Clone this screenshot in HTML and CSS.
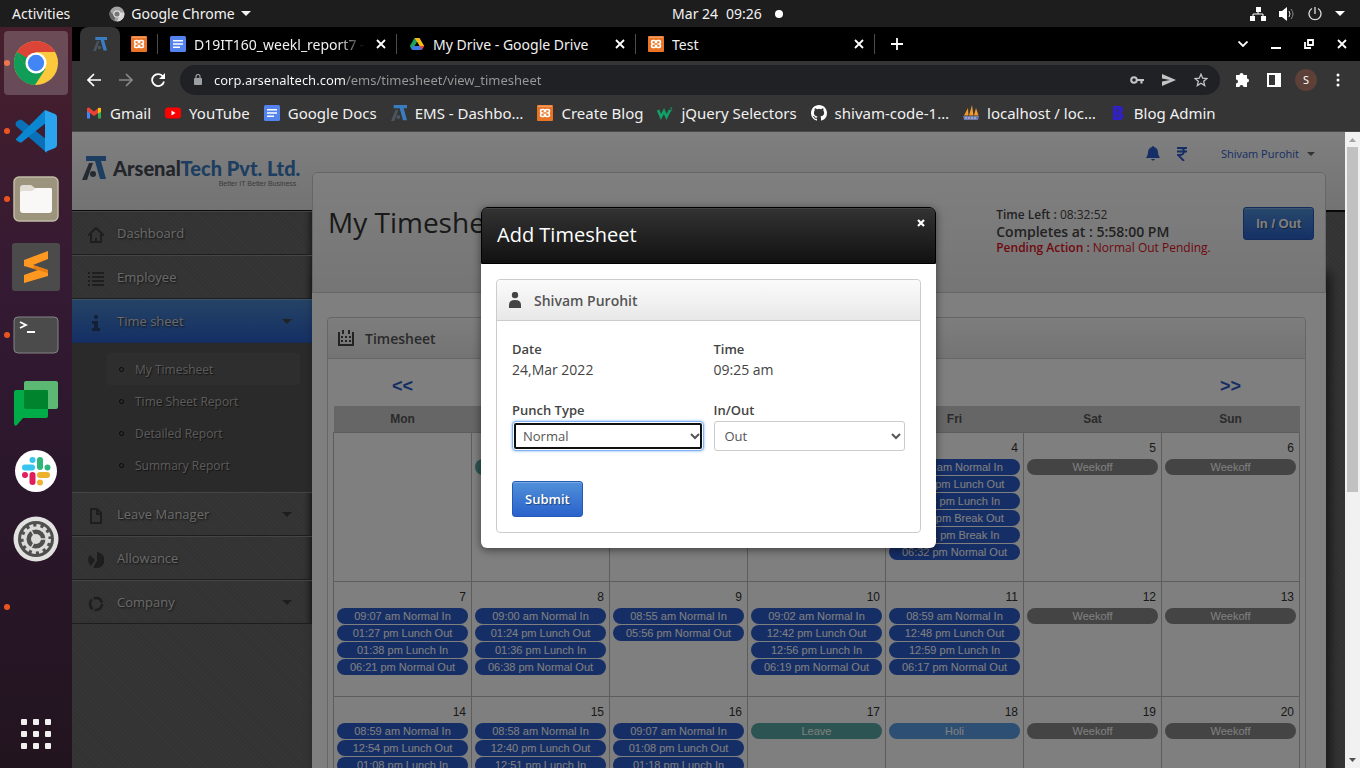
FILE: index.html
```html
<!DOCTYPE html>
<html lang="en">
<head>
<meta charset="utf-8">
<title>My Timesheet</title>
<link rel="stylesheet" href="styles.css">
</head>
<body>
<svg class="sprite" aria-hidden="true">
  <symbol id="i-arsenal" viewBox="0 0 24 24"><path d="M4 0h20v5h-5l5 18h-6L13 5H4z" fill="#3a7cc0"/><path d="M7 7h4L5 24H0z" fill="#4a5560"/><circle cx="11" cy="18" r="3" fill="#4a5560"/></symbol>
  <symbol id="i-xampp" viewBox="0 0 16 16"><rect width="16" height="16" rx="1" fill="#ea7426"/><path d="M1 1.200h14" stroke="#fff" stroke-width=".6" opacity=".7"/><path d="M5 4.500h1.500q1 0 1 1v1h1v-1q0-1 1-1H11q1.500 0 1.500 1.500T11 8q1.500.5 1.500 2t-1.500 1.500H9.500q-1 0-1-1v-1h-1v1q0 1-1 1H5q-1.500 0-1.500-1.500T5 8Q3.500 7.500 3.500 6T5 4.500z" fill="none" stroke="#fff" stroke-width="1.600"/></symbol>
  <symbol id="i-docs" viewBox="0 0 16 16"><rect width="16" height="16" rx="1.500" fill="#5383ec"/><path d="M3 4.800h10M3 8h10M3 11.200h7" stroke="#fff" stroke-width="1.600"/></symbol>
  <symbol id="i-drive" viewBox="0 0 16 16"><path d="M5.500 2h5L8 6.200 3 14 .800 10z" fill="#20a15a"/><path d="M10.500 2 15.200 10h-4.600L5.700 2z" fill="#f9bc15"/><path d="M3.300 10h9.500l-.300 4H3z" fill="#3f78e8"/><path d="M10.700 10h4.500L13 14z" fill="#e94335"/><path d="M8 6.300 10.200 10H5.800z" fill="#000"/></symbol>
  <symbol id="i-close" viewBox="0 0 12 12"><path d="m2 2 8 8M10 2l-8 8" stroke="currentColor" stroke-width="1.800"/></symbol>
  <symbol id="i-caret" viewBox="0 0 10 5"><path d="M0 0h10L5 5z" fill="currentColor"/></symbol>
  <symbol id="i-chrome" viewBox="0 0 48 48"><circle cx="24" cy="24" r="23" fill="#fcc93c"/><path d="M4.100 12.500A23 23 0 0 1 43.900 12.500H24L14 29z" fill="#db4437"/><path d="M4.100 12.500A23 23 0 0 0 23 47L34 30 14.500 30z" fill="#0f9d58"/><path d="M4.100 12.500 14.500 30 24 24z" fill="#0f9d58"/><circle cx="24" cy="24" r="11" fill="#fff"/><circle cx="24" cy="24" r="8.500" fill="#4285f4"/></symbol>
</svg>

<div class="desktop">
  <header class="topbar">
    <div class="topbar-side">
      <span>Activities</span>
      <span class="topbar-app">
        <svg width="16" height="16" viewBox="0 0 16 16"><circle cx="8" cy="8" r="7.500" fill="#a3a3a3"/><path d="M1 5 6 11l-.500 4A7.500 7.500 0 0 1 1 5z" fill="#666"/><path d="M11 8.500 8 15.500a7.500 7.500 0 0 0 7.200-9H10z" fill="#d8d8d8"/><circle cx="8" cy="8" r="3.600" fill="#eee"/><circle cx="8" cy="8" r="2.600" fill="#777"/></svg>
        Google Chrome
        <svg class="caret" width="10" height="5"><use href="#i-caret"/></svg>
      </span>
    </div>
    <div class="topbar-clock"><span>Mar 24</span><span>09:26</span><i class="clock-dot"></i></div>
    <div class="topbar-status">
      <svg width="16" height="14" viewBox="0 0 16 14"><path d="M8 3v4M3 10V7h10v3" fill="none" stroke="#fff"/><path d="M6 0h5v5H6zM0 9h5v5H0zM11 9h5v5h-5z" fill="#fff"/></svg>
      <svg width="16" height="14" viewBox="0 0 16 14"><path d="M0 4h3l5-4v14L3 10H0z" fill="#fff"/><path d="M10 4q2 3 0 6" fill="none" stroke="#ddd"/><path d="M12 2q4 5 0 10" fill="none" stroke="#888"/></svg>
      <svg width="14" height="14" viewBox="0 0 14 14"><path d="M7 0v7M4 1.500a6 6 0 1 0 6 0" fill="none" stroke="#ddd" stroke-width="1.300"/></svg>
      <svg width="10" height="5" color="#fff"><use href="#i-caret"/></svg>
    </div>
  </header>

  <div class="workspace">
    <nav class="dock" aria-label="Dock">
      <a href="#" class="dock-item running selected" aria-label="Chrome"><svg width="46" height="46"><use href="#i-chrome"/></svg></a>
      <a href="#" class="dock-item running" aria-label="Code"><svg width="44" height="44" viewBox="0 0 44 44"><path d="M2 13 5 11q2-1 3 0l25 20v13L2 17q-1-2 0-4z" fill="#0a70b8"/><path d="M2 30 31 1l2 12L8 33q-1 1-3 0l-3-2z" fill="#0b86d1"/><path d="M31 1 41 5q2 1 2 3v28q0 2-2 3l-10 4z" fill="#2ba4f0"/></svg></a>
      <a href="#" class="dock-item running" aria-label="Files"><svg width="46" height="46" viewBox="0 0 46 46"><rect x="1" y="1" width="44" height="44" rx="5" fill="#9d947e" stroke="#c1bba5" stroke-width="1.500"/><path d="M7 12q0-3 3-3h8l4 3h16q1 0 1 2v8H7z" fill="#e2ddd4"/><path d="M7 17q0-2 2-2h10l4-3h14q2 0 2 2v20q0 3-3 3H10q-3 0-3-3z" fill="#f9f8f6"/></svg></a>
      <a href="#" class="dock-item" aria-label="Sublime Text"><svg width="48" height="48" viewBox="0 0 48 48"><rect width="48" height="48" rx="3" fill="#4b4b4b"/><path d="M12 17 36 8v8l-15 6 15 5v6L12 40v-8l14-5-14-4z" fill="#ff9820"/><path d="m21 22 15 5v3l-14-4z" fill="#e87e12"/></svg></a>
      <a href="#" class="dock-item running" aria-label="Terminal"><svg width="46" height="38" viewBox="0 0 46 38"><rect x="1" y="1" width="44" height="36" rx="4" fill="#4b4b4b" stroke="#858585"/><path d="m7 6 6 3-6 3M14 16h8" fill="none" stroke="#fff" stroke-width="1.800"/></svg></a>
      <a href="#" class="dock-item" aria-label="Chat"><svg width="44" height="46" viewBox="0 0 44 46"><rect x="10" y="1" width="34" height="28" rx="2" fill="#5bb974"/><path d="M2 10h31q1 0 1 2v24q0 2-2 2H9l-6 7q-2 2-3-1V12q0-2 2-2z" fill="#00ac47"/><path d="M10 10h23q1 0 1 2v17H12q-2 0-2-2z" fill="#00832d"/></svg></a>
      <a href="#" class="dock-item" aria-label="Slack"><svg width="42" height="42" viewBox="0 0 42 42"><circle cx="21" cy="21" r="21" fill="#fff"/><g stroke-width="6" stroke-linecap="round"><path d="M10 17.500h7M17.500 10v0" stroke="#36c5f0"/><path d="M25 10v7M32.500 17.500h0" stroke="#2eb67d"/><path d="M17.500 25v7M10 25h0" stroke="#e01e5a"/><path d="M25 25h7M25 32.500h0" stroke="#ecb22e"/></g></svg></a>
      <a href="#" class="dock-item" aria-label="Settings"><svg width="46" height="46" viewBox="0 0 46 46"><circle cx="23" cy="23" r="22.500" fill="#e2e2e0"/><circle cx="23" cy="23" r="18" fill="#505050"/><circle cx="23" cy="23" r="13.500" fill="none" stroke="#dcdcda" stroke-width="3" stroke-dasharray="4 3.070"/><circle cx="23" cy="23" r="11" fill="none" stroke="#dcdcda" stroke-width="3"/><circle cx="23" cy="23" r="5" fill="#dcdcda"/><path d="M23 23h10M23 23l-5-9M23 23l-5 9" stroke="#dcdcda" stroke-width="1.500"/></svg></a>
      <span class="dock-item running"></span>
      <a href="#" class="dock-item dock-apps" aria-label="Show applications"><svg width="30" height="30" viewBox="0 0 30 30" fill="#f1f1ef"><rect width="6" height="6" rx="1"/><rect x="12" width="6" height="6" rx="1"/><rect x="24" width="6" height="6" rx="1"/><rect y="12" width="6" height="6" rx="1"/><rect x="12" y="12" width="6" height="6" rx="1"/><rect x="24" y="12" width="6" height="6" rx="1"/><rect y="24" width="6" height="6" rx="1"/><rect x="12" y="24" width="6" height="6" rx="1"/><rect x="24" y="24" width="6" height="6" rx="1"/></svg></a>
    </nav>

    <section class="browser">
      <div class="tabstrip">
        <a href="#" class="tab tab-pinned tab-active" aria-label="My Timesheet"><svg width="14" height="16"><use href="#i-arsenal"/></svg></a>
        <a href="#" class="tab tab-pinned tab-sep" aria-label="Create Blog"><svg width="16" height="16"><use href="#i-xampp"/></svg></a>
        <div class="tab tab-sep"><svg width="16" height="16"><use href="#i-docs"/></svg><a href="#" class="tab-title tab-fade">D19IT160_weekl_report7 -</a><button class="icon-btn" aria-label="Close tab"><svg width="12" height="12"><use href="#i-close"/></svg></button></div>
        <div class="tab tab-sep"><svg width="16" height="16"><use href="#i-drive"/></svg><a href="#" class="tab-title">My Drive - Google Drive</a><button class="icon-btn" aria-label="Close tab"><svg width="12" height="12"><use href="#i-close"/></svg></button></div>
        <div class="tab tab-sep"><svg width="16" height="16"><use href="#i-xampp"/></svg><a href="#" class="tab-title">Test</a><button class="icon-btn" aria-label="Close tab"><svg width="12" height="12"><use href="#i-close"/></svg></button></div>
        <button class="icon-btn tab-new" aria-label="New tab"><svg width="12" height="12" viewBox="0 0 12 12"><path d="M6 0v12M0 6h12" stroke="#fff" stroke-width="1.800"/></svg></button>
        <div class="window-controls">
          <button class="icon-btn" aria-label="Search tabs"><svg width="10" height="6" viewBox="0 0 10 6"><path d="m.500.500 4.500 4.500L9.500.500" fill="none" stroke="#fff" stroke-width="1.800"/></svg></button>
          <button class="icon-btn" aria-label="Minimize"><svg width="10" height="10" viewBox="0 0 10 10"><path d="M0 9h10" stroke="#fff" stroke-width="2"/></svg></button>
          <button class="icon-btn" aria-label="Restore"><svg width="10" height="10" viewBox="0 0 10 10"><path d="M4 1h5v5H4zM1 3v6h6" fill="none" stroke="#fff" stroke-width="1.800"/></svg></button>
          <button class="icon-btn" aria-label="Close"><svg width="12" height="12"><use href="#i-close"/></svg></button>
        </div>
      </div>

      <div class="toolbar">
        <button class="icon-btn" aria-label="Back"><svg width="14" height="14" viewBox="0 0 14 14"><path d="M14 7H1M7 1 1 7l6 6" fill="none" stroke="#fff" stroke-width="1.700"/></svg></button>
        <button class="icon-btn" aria-label="Forward"><svg width="14" height="14" viewBox="0 0 14 14"><path d="M0 7h13M7 1l6 6-6 6" fill="none" stroke="#888" stroke-width="1.700"/></svg></button>
        <button class="icon-btn" aria-label="Reload"><svg width="14" height="14" viewBox="0 0 14 14"><path d="M12 3.500A6 6 0 1 0 13 8.500" fill="none" stroke="#fff" stroke-width="1.800"/><path d="M14 0v6H8z" fill="#fff"/></svg></button>
        <div class="omnibox">
          <svg width="8" height="11" viewBox="0 0 8 11"><rect y="4" width="8" height="7" rx="1" fill="#9aa0a6"/><path d="M2 4V2.500a2 2 0 0 1 4 0V4" fill="none" stroke="#9aa0a6" stroke-width="1.200"/></svg>
          <input class="url" type="text" aria-label="Address" value="corp.arsenaltech.com/ems/timesheet/view_timesheet">
          <button class="icon-btn" aria-label="Password"><svg width="14" height="8" viewBox="0 0 14 8"><circle cx="4" cy="4" r="2.800" fill="none" stroke="#c4c4c4" stroke-width="2"/><path d="M7 4h7M11.500 4v3.500" stroke="#c4c4c4" stroke-width="2.200"/></svg></button>
          <button class="icon-btn" aria-label="Send"><svg width="14" height="12" viewBox="0 0 14 12"><path d="m0 0 14 6L0 12V7.500L8 6 0 4.500z" fill="#c4c4c4"/></svg></button>
          <button class="icon-btn" aria-label="Bookmark"><svg width="14" height="14" viewBox="0 0 14 14"><path d="m7 1.200 1.700 4 4.300.300-3.300 2.800 1 4.300L7 10.300l-3.700 2.300 1-4.300L1 5.500l4.300-.300z" fill="none" stroke="#c4c4c4" stroke-width="1.300"/></svg></button>
        </div>
        <div class="toolbar-actions">
          <button class="icon-btn" aria-label="Extensions"><svg width="15" height="15" viewBox="0 0 15 15"><path d="M1 3h3.500a2 2 0 1 1 4 0H12v3.500a2 2 0 1 1 0 4V15H8.500a2 2 0 0 0-4 0H1v-3.500a2 2 0 0 0 0-4z" fill="#fff"/></svg></button>
          <button class="icon-btn" aria-label="Side panel"><svg width="14" height="14" viewBox="0 0 14 14"><path d="M0 0h14v14H0zM2 2v10h6V2z" fill="#fff" fill-rule="evenodd"/></svg></button>
          <button class="avatar" aria-label="Profile S">S</button>
          <button class="icon-btn" aria-label="Menu"><svg width="4" height="14" viewBox="0 0 4 14" fill="#fff"><circle cx="2" cy="2" r="1.500"/><circle cx="2" cy="7" r="1.500"/><circle cx="2" cy="12" r="1.500"/></svg></button>
        </div>
      </div>

      <nav class="bookmarks" aria-label="Bookmarks">
        <a href="#"><svg width="16" height="16" viewBox="0 0 16 16"><path d="M1 3.500v10h3V6z" fill="#4285f4"/><path d="M15 3.500v10h-3V6z" fill="#34a853"/><path d="m1 3 2-.500 5 4 5-4 2 .500v3l-7 5-7-5z" fill="#ea4335"/><path d="m12 3 3 0v3.500l-3 2z" fill="#fbbc04"/></svg>Gmail</a>
        <a href="#"><svg width="16" height="16" viewBox="0 0 16 16"><rect y="2.500" width="16" height="11" rx="3" fill="#f00"/><path d="m6.500 5.500 4 2.500-4 2.500z" fill="#fff"/></svg>YouTube</a>
        <a href="#"><svg width="16" height="16"><use href="#i-docs"/></svg>Google Docs</a>
        <a href="#"><svg width="16" height="16"><use href="#i-arsenal"/></svg>EMS - Dashbo…</a>
        <a href="#"><svg width="16" height="16"><use href="#i-xampp"/></svg>Create Blog</a>
        <a href="#"><svg width="16" height="16" viewBox="0 0 16 16"><path d="m1 5 3 7 3-6 2.500 6L13 5" fill="none" stroke="#12a06a" stroke-width="2.600"/><path d="M13 3h2l-1 1.500q1.500.500 0 2" fill="none" stroke="#12a06a" stroke-width=".8"/></svg>jQuery Selectors</a>
        <a href="#"><svg width="16" height="16" viewBox="0 0 16 16"><path fill="#fff" d="M8 0C3.580 0 0 3.580 0 8c0 3.540 2.290 6.530 5.470 7.590.4.070.55-.17.55-.38 0-.19-.01-.82-.01-1.490-2.010.37-2.530-.49-2.690-.94-.09-.23-.48-.94-.82-1.130-.28-.15-.68-.52-.01-.53.63-.01 1.080.58 1.230.82.720 1.210 1.870.87 2.330.66.070-.52.28-.87.51-1.070-1.780-.2-3.640-.89-3.640-3.950 0-.87.31-1.590.82-2.150-.08-.2-.36-1.020.08-2.120 0 0 .67-.21 2.200.82a7.600 7.600 0 0 1 4 0c1.530-1.040 2.200-.82 2.200-.82.44 1.100.16 1.920.08 2.120.51.56.82 1.270.82 2.150 0 3.070-1.870 3.750-3.650 3.950.29.25.54.73.54 1.480 0 1.070-.01 1.930-.01 2.200 0 .21.15.46.55.38A8 8 0 0 0 16 8c0-4.420-3.580-8-8-8z"/></svg>shivam-code-1…</a>
        <a href="#"><svg width="16" height="16" viewBox="0 0 16 16"><path d="M1 10.500 5 3l.500 7.500zM6 10.500 9 0l1.500 10.500zM11 10.500 13 3l2.500 7.500z" fill="#f29b2e"/><path d="M0 11h16l-1 4H1z" fill="#6c78af"/><path d="M2 13h12" stroke="#ccc" stroke-dasharray="2 1"/></svg>localhost / loc…</a>
        <a href="#"><svg width="16" height="16" viewBox="0 0 16 16"><path fill="#3120c8" fill-rule="evenodd" d="M3 1h6q4 0 4 3.500 0 2.500-2 3.200 2.500.8 2.500 3.500Q13.500 15 9 15H3zM7 4v2.500h1.500V4zM7 9.500V12h2V9.500z"/></svg>Blog Admin</a>
      </nav>

      <div class="viewport">
        <div class="page">
          <aside class="sidebar">
            <a href="#" class="brand">
              <svg width="24" height="24"><use href="#i-arsenal"/></svg>
              <span class="brand-text"><span class="brand-name">Arsenal<b>Tech Pvt. Ltd.</b></span><small>Better IT Better Business</small></span>
            </a>
            <nav class="menu" aria-label="Main">
              <a href="#" class="menu-item"><svg width="16" height="16" viewBox="0 0 16 16"><path d="M0 8.500 8 1l8 7.500M3 7v8h10V7" fill="none" stroke="currentColor" stroke-width="2"/><path d="M7 11h2v4H7z" fill="currentColor"/></svg><span>Dashboard</span></a>
              <a href="#" class="menu-item"><svg width="16" height="16" viewBox="0 0 16 16"><path d="M0 2h2M4 2h12M0 6h2M4 6h12M0 10h2M4 10h12M0 14h2M4 14h12" stroke="currentColor" stroke-width="2"/></svg><span>Employee</span></a>
              <a href="#" class="menu-item menu-current"><svg width="16" height="16" viewBox="0 0 16 16"><circle cx="8" cy="2" r="2" fill="currentColor"/><path d="M4 6h6v7h2v3H4v-3h2V9H4z" fill="currentColor"/></svg><span>Time sheet</span><svg class="menu-caret" width="10" height="5"><use href="#i-caret"/></svg></a>
              <div class="submenu">
                <a href="#" class="submenu-current">My Timesheet</a>
                <a href="#">Time Sheet Report</a>
                <a href="#">Detailed Report</a>
                <a href="#">Summary Report</a>
              </div>
              <a href="#" class="menu-item"><svg width="16" height="16" viewBox="0 0 16 16"><path d="M3 1h6l4 4v10H3zM9 1v5h4" fill="none" stroke="currentColor" stroke-width="2"/></svg><span>Leave Manager</span><svg class="menu-caret" width="10" height="5"><use href="#i-caret"/></svg></a>
              <a href="#" class="menu-item"><svg width="16" height="16" viewBox="0 0 16 16"><path d="M9 0a8 8 0 0 1-4 15.500L9 9z" fill="currentColor"/><path d="M7 1v7L3 14A8 8 0 0 1 0 8q0-3 2-5l5 5V1z" fill="currentColor"/><path d="M10 .200A8 8 0 0 1 7 16l3-7z" fill="currentColor"/></svg><span>Allowance</span></a>
              <a href="#" class="menu-item"><svg width="16" height="16" viewBox="0 0 16 16"><circle cx="8" cy="8" r="6" fill="none" stroke="currentColor" stroke-width="2.500" stroke-dasharray="10.500 2"/></svg><span>Company</span><svg class="menu-caret" width="10" height="5"><use href="#i-caret"/></svg></a>
            </nav>
          </aside>

          <div class="content">
            <div class="usernav">
              <a href="#" aria-label="Notifications"><svg width="14" height="15" viewBox="0 0 14 15"><path d="M6 1a1 1 0 0 1 2 0q4 1 4 5.500 0 3 2 5.500H0q2-2.500 2-5.500Q2 2 6 1zM5 13h4q-2 3-4 0z" fill="currentColor"/></svg></a>
              <a href="#" aria-label="Payroll"><svg width="10" height="14" viewBox="0 0 10 14"><path d="M0 1h10M0 4.500h10M0 1h3q4 0 4 3.300T3 8H1l6 6" fill="none" stroke="currentColor" stroke-width="1.900"/></svg></a>
              <a href="#" class="user">Shivam Purohit<svg width="8" height="4" viewBox="0 0 8 4"><path d="M0 0h8L4 4z" fill="#666"/></svg></a>
            </div>
            <main class="main">
              <div class="titlebar">
                <h1>My Timesheet</h1>
                <div class="status">
                  <div><b>Time Left :</b> 08:32:52</div>
                  <div class="status-big">Completes at : 5:58:00 PM</div>
                  <div class="status-alert"><b>Pending Action :</b> Normal Out Pending.</div>
                </div>
                <button class="btn btn-inout">In / Out</button>
              </div>
              <section class="panel calendar-panel">
                <h2 class="panel-head"><svg width="16" height="16" viewBox="0 0 16 16"><path d="M0 2h2v12h12V2h2v14H0zM4 0h2v4H4zM10 0h2v4h-2zM3 6h2v2H3zM7 6h2v2H7zM11 6h2v2h-2zM3 10h2v2H3zM7 10h2v2H7zM11 10h2v2h-2z" fill="currentColor"/></svg>Timesheet</h2>
                <table class="calendar">
                  <thead>
                    <tr class="cal-nav"><th><a href="#">&lt;&lt;</a></th><th colspan="5"></th><th><a href="#">&gt;&gt;</a></th></tr>
                    <tr class="cal-days"><th>Mon</th><th>Tue</th><th>Wed</th><th>Thu</th><th>Fri</th><th>Sat</th><th>Sun</th></tr>
                  </thead>
                  <tbody>
                    <tr>
                      <td></td>
                      <td><time>1</time><span class="pill leave">Leave</span></td>
                      <td><time>2</time></td>
                      <td><time>3</time></td>
                      <td><time>4</time><span class="pill">09:00 am Normal In</span><span class="pill">12:40 pm Lunch Out</span><span class="pill">01:04 pm Lunch In</span><span class="pill">04:50 pm Break Out</span><span class="pill">05:01 pm Break In</span><span class="pill">06:32 pm Normal Out</span></td>
                      <td><time>5</time><span class="pill off">Weekoff</span></td>
                      <td><time>6</time><span class="pill off">Weekoff</span></td>
                    </tr>
                    <tr>
                      <td><time>7</time><span class="pill">09:07 am Normal In</span><span class="pill">01:27 pm Lunch Out</span><span class="pill">01:38 pm Lunch In</span><span class="pill">06:21 pm Normal Out</span></td>
                      <td><time>8</time><span class="pill">09:00 am Normal In</span><span class="pill">01:24 pm Lunch Out</span><span class="pill">01:36 pm Lunch In</span><span class="pill">06:38 pm Normal Out</span></td>
                      <td><time>9</time><span class="pill">08:55 am Normal In</span><span class="pill">05:56 pm Normal Out</span></td>
                      <td><time>10</time><span class="pill">09:02 am Normal In</span><span class="pill">12:42 pm Lunch Out</span><span class="pill">12:56 pm Lunch In</span><span class="pill">06:19 pm Normal Out</span></td>
                      <td><time>11</time><span class="pill">08:59 am Normal In</span><span class="pill">12:48 pm Lunch Out</span><span class="pill">12:59 pm Lunch In</span><span class="pill">06:17 pm Normal Out</span></td>
                      <td><time>12</time><span class="pill off">Weekoff</span></td>
                      <td><time>13</time><span class="pill off">Weekoff</span></td>
                    </tr>
                    <tr>
                      <td><time>14</time><span class="pill">08:59 am Normal In</span><span class="pill">12:54 pm Lunch Out</span><span class="pill">01:08 pm Lunch In</span></td>
                      <td><time>15</time><span class="pill">08:58 am Normal In</span><span class="pill">12:40 pm Lunch Out</span><span class="pill">12:51 pm Lunch In</span></td>
                      <td><time>16</time><span class="pill">09:07 am Normal In</span><span class="pill">01:08 pm Lunch Out</span><span class="pill">01:18 pm Lunch In</span></td>
                      <td><time>17</time><span class="pill leave">Leave</span></td>
                      <td><time>18</time><span class="pill holiday">Holi</span></td>
                      <td><time>19</time><span class="pill off">Weekoff</span></td>
                      <td><time>20</time><span class="pill off">Weekoff</span></td>
                    </tr>
                  </tbody>
                </table>
              </section>
            </main>
          </div>
        </div>

        <div class="overlay">
          <section class="modal" role="dialog" aria-labelledby="modal-title">
            <header class="modal-head"><h2 id="modal-title">Add Timesheet</h2><button class="modal-close" aria-label="Close"><svg width="8" height="8" viewBox="0 0 8 8"><path d="m1 1 6 6M7 1 1 7" stroke="#fff" stroke-width="2.200"/></svg></button></header>
            <div class="modal-body">
              <form class="panel">
                <h3 class="panel-head"><svg width="16" height="16" viewBox="0 0 16 16"><circle cx="8" cy="3" r="3.200" fill="currentColor"/><path d="M2 16v-3q0-5 6-5t6 5v3z" fill="currentColor"/></svg>Shivam Purohit</h3>
                <div class="form-grid">
                  <div class="field"><b>Date</b><span>24,Mar 2022</span></div>
                  <div class="field"><b>Time</b><span>09:25 am</span></div>
                  <div class="field"><label for="punch">Punch Type</label><select id="punch" class="select-focused"><option>Normal</option><option>Lunch</option><option>Break</option></select></div>
                  <div class="field"><label for="inout">In/Out</label><select id="inout"><option>Out</option><option>In</option></select></div>
                </div>
                <button type="button" class="btn btn-submit">Submit</button>
              </form>
            </div>
          </section>
        </div>

        <div class="scrollbar" aria-hidden="true">
          <svg width="7" height="4" viewBox="0 0 7 4"><path d="M0 4h7L3.500 0z" fill="#a3a3a3"/></svg>
          <div class="scroll-track"><div class="scroll-thumb"></div></div>
          <svg width="7" height="4" viewBox="0 0 7 4"><path d="M0 0h7L3.500 4z" fill="#505050"/></svg>
        </div>
      </div>
    </section>
  </div>
</div>
</body>
</html>
```
FILE: styles.css
```css
* { box-sizing: border-box; }

body {
  margin: 0;
  background: #000;
  font-family: "Noto Sans", "Open Sans", sans-serif;
}

a { color: inherit; text-decoration: none; }
svg { flex: none; display: block; }
h1, h2, h3 { margin: 0; font-weight: 400; }
button { font: inherit; cursor: pointer; }

.sprite { display: none; }

.icon-btn {
  display: flex;
  align-items: center;
  justify-content: center;
  width: 16px;
  padding: 0;
  border: 0;
  background: none;
  color: #fff;
}

/* Desktop shell */
.desktop { display: flex; flex-direction: column; height: 100vh; overflow: hidden; }

.topbar {
  display: grid;
  grid-template-columns: 1fr auto 1fr;
  align-items: center;
  height: 27px;
  flex: none;
  padding: 0 15px 0 12px;
  background: #1d1d1d;
  color: #f2f2f2;
  font-size: 14px;
}
.topbar-side { display: flex; gap: 39px; }
.topbar-app { display: flex; align-items: center; gap: 6px; }
.topbar-clock { display: flex; align-items: center; gap: 8px; padding-left: 98px; }
.clock-dot { width: 8px; height: 8px; margin-left: 5px; border-radius: 50%; background: #fff; }
.topbar-status { display: flex; align-items: center; justify-content: flex-end; gap: 13px; }

.workspace { display: flex; flex: 1; min-height: 0; }

.dock {
  display: flex;
  flex-direction: column;
  flex: none;
  width: 72px;
  padding: 2px 0 0;
  background: linear-gradient(#471f2c, #341a33 35%, #2b172c 60%, #22141f);
}
.dock-item {
  position: relative;
  display: flex;
  align-items: center;
  justify-content: center;
  height: 68px;
  flex: none;
}
.selected::after {
  content: "";
  position: absolute;
  inset: 2px 4px;
  border-radius: 4px;
  background: rgba(255, 255, 255, .2);
}
.selected svg { position: relative; z-index: 1; }
.running::before {
  content: "";
  position: absolute;
  left: 4px;
  top: 31px;
  width: 6px;
  height: 6px;
  border-radius: 50%;
  background: #e95420;
}
.dock-apps { margin-top: auto; }

/* Browser chrome */
.browser { display: flex; flex-direction: column; flex: 1; min-width: 0; }

.tabstrip {
  display: flex;
  flex: none;
  height: 34px;
  padding: 0 10px 0 8px;
  background: #000;
  color: #f1f1f1;
  font-size: 14px;
}
.tab {
  position: relative;
  display: flex;
  align-items: center;
  gap: 8px;
  width: 239px;
  padding: 0 8px 0 12px;
}
.tab-pinned { justify-content: center; width: 38px; padding: 0; }
.tab-active { width: 40px; border-radius: 8px 8px 0 0; background: #353535; }
.tab-sep::after {
  content: "";
  position: absolute;
  right: 0;
  top: 7px;
  width: 1px;
  height: 20px;
  background: #4c4c4c;
}
.tab-title { flex: 1; overflow: hidden; white-space: nowrap; }
.tab-fade { -webkit-mask-image: linear-gradient(90deg, #000 84%, transparent); mask-image: linear-gradient(90deg, #000 84%, transparent); }
.tab-new { width: 44px; }
.window-controls { display: flex; gap: 17px; margin-left: auto; }

.toolbar {
  display: flex;
  align-items: center;
  gap: 16px;
  flex: none;
  height: 37px;
  padding: 0 11px 0 14px;
  background: #353535;
}
.omnibox {
  display: flex;
  align-items: center;
  gap: 16px;
  flex: 1;
  height: 30px;
  margin-left: -2px;
  padding: 0 11px 0 14px;
  border-radius: 15px;
  background: #202124;
}
.url {
  flex: 1;
  min-width: 0;
  margin-left: -4px;
  padding: 0;
  border: 0;
  outline: 0;
  background: linear-gradient(90deg, #fff 132px, #9a9a9a 132px);
  -webkit-background-clip: text;
  background-clip: text;
  color: transparent;
  font: 13px/20px "Noto Sans", sans-serif;
}
.toolbar-actions { display: flex; align-items: center; gap: 10px; margin-left: -5px; }
.toolbar-actions .icon-btn { width: 22px; }
.avatar {
  width: 22px;
  height: 22px;
  padding: 0;
  border: 0;
  border-radius: 50%;
  background: #5d4037;
  color: #fff;
  font-size: 11px;
}

.bookmarks {
  display: flex;
  gap: 14px;
  flex: none;
  height: 34px;
  padding: 0 14px;
  border-bottom: 1px solid #4a4a4a;
  background: #353535;
  color: #f1f1f1;
  font-size: 15px;
  white-space: nowrap;
}
.bookmarks a { display: flex; align-items: center; gap: 8px; height: 29px; }

.viewport { position: relative; display: flex; flex: 1; min-height: 0; }

.scrollbar {
  display: flex;
  flex-direction: column;
  align-items: center;
  gap: 5px;
  width: 15px;
  padding: 6px 0;
  background: #f1f1f1;
}
.scroll-track { flex: 1; }
.scroll-thumb { width: 11px; height: 57%; background: #c1c1c1; }

/* EMS page */
.page {
  display: grid;
  grid-template-columns: 240px 1fr;
  flex: 1;
  min-width: 0;
  overflow: hidden;
  padding-right: 19px;
  background:
    linear-gradient(#fff, #e6e6e6) 0 0 / 100% 78px no-repeat,
    linear-gradient(#111, #111) 0 0 / 100% 80px no-repeat,
    repeating-linear-gradient(45deg, #6c6c6c 0 1px, #666 1px 3px);
  color: #444;
  font-family: "Open Sans", sans-serif;
  font-size: 12px;
}

.brand { display: flex; gap: 7px; height: 79px; padding: 24px 0 0 10px; }
.brand-text { display: flex; flex-direction: column; }
.brand-name { color: #444b55; font: 900 20px/24px Lato, sans-serif; white-space: nowrap; }
.brand-name b { color: #3a7cc0; font-weight: 900; }
.brand small { align-self: flex-end; padding-right: 4px; color: #777; font: 7px/8px "Liberation Sans", sans-serif; }

.menu { box-shadow: inset -6px 0 6px -4px rgba(0, 0, 0, .5); }
.menu-item {
  display: flex;
  align-items: center;
  gap: 13px;
  height: 44px;
  padding: 0 20px 0 16px;
  border-top: 1px solid #8a8a8a;
  border-bottom: 1px solid #3c3c3c;
  color: #3c3c3c;
  font-size: 13px;
}
.menu-item > svg:first-child { margin-top: 4px; }
.menu-item span { flex: 1; color: #d4d4d4; text-shadow: 1px 1px 2px #222; }
.menu-current {
  border-top-color: #7ea3cf;
  border-bottom-color: #2c59a8;
  background: linear-gradient(#4a86cc, #2a60ca);
  color: #26406c;
}
.menu-current .menu-caret { color: #444; }

.submenu {
  display: flex;
  flex-direction: column;
  padding: 10px 12px 11px 35px;
  background: #555;
  color: #b8b8b8;
  text-shadow: 1px 1px 1px #222;
}
.submenu a { display: flex; align-items: center; gap: 13px; height: 32px; padding-left: 12px; border-radius: 4px; }
.submenu a::before { content: ""; width: 5px; height: 5px; border: 1px solid #111; border-radius: 50%; box-sizing: border-box; margin-right: -2px; }
.submenu .submenu-current { background: #5d5d5d; }

.content { display: flex; flex-direction: column; min-width: 0; }
.usernav {
  display: flex;
  align-items: center;
  justify-content: flex-end;
  gap: 17px;
  height: 40px;
  flex: none;
  padding: 3px 11px 0 0;
  color: #2b5dca;
  font-size: 11px;
}
.user { display: flex; align-items: center; gap: 8px; margin-left: 17px; }

.main {
  flex: 1;
  border-radius: 5px 5px 0 0;
  background: #fff;
  box-shadow: 4px 100px 12px rgba(0, 0, 0, .6);
}
.titlebar {
  display: flex;
  align-items: flex-start;
  height: 121px;
  padding: 34px 11px 0 15px;
  border: 1px solid #ccc;
  border-radius: 5px 5px 0 0;
  background: linear-gradient(#fff, #ebebeb);
}
.titlebar h1 { flex: 1; margin-top: -5px; color: #333; font-size: 28px; line-height: 40px; }
.status { width: 247px; line-height: 16px; }
.status b { font-weight: 600; }
.status-big { font-size: 14px; font-weight: 600; line-height: 17px; }
.status-alert { color: #e0101c; white-space: nowrap; }

.btn {
  padding: 0 12px;
  border: 1px solid #2459b8;
  border-radius: 3px;
  background: linear-gradient(#5090d8, #2a62cc);
  box-shadow: inset 0 1px 0 rgba(255, 255, 255, .25);
  color: #fff;
  font-size: 13px;
  font-weight: 600;
  text-shadow: 1px 1px 1px rgba(0, 0, 0, .4);
  white-space: nowrap;
}
.btn-inout { height: 33px; font-family: "Liberation Sans", sans-serif; font-weight: 700; }

.panel { border: 1px solid #ccc; border-radius: 4px; background: #fff; }
.panel-head {
  display: flex;
  align-items: center;
  gap: 11px;
  height: 41px;
  padding: 0 10px;
  border-bottom: 1px solid #ccc;
  border-radius: 4px 4px 0 0;
  background: linear-gradient(#fbfbfb, #e8e8e8);
  color: #555;
  font-size: 14px;
  font-weight: 600;
}
.panel-head svg { color: #444; }
.calendar-panel { margin: 24px 20px 0 15px; padding-bottom: 20px; }

.calendar {
  width: calc(100% - 10px);
  margin: 0 5px;
  border-collapse: collapse;
  table-layout: fixed;
  color: #333;
  font: 12px/16px "Liberation Sans", sans-serif;
}
.cal-nav th { height: 47px; padding: 6px 0 0; color: #2b5dca; font-size: 18px; }
.cal-days th { height: 26px; padding: 0; background: #ccc; color: #555; }
.calendar td { padding: 7px 3px 20px; border: 1px solid #bbb; vertical-align: top; }
.calendar time { display: block; padding: 0 2px 0 0; margin-bottom: 3px; text-align: right; }
.pill {
  display: block;
  height: 16px;
  margin-bottom: 1px;
  border-radius: 8px;
  background: #2d5dcc;
  color: #fff;
  font-size: 11px;
  text-align: center;
  white-space: nowrap;
}
.off { background: #888; }
.leave { background: #59a8a5; }
.holiday { background: #5b9fe6; }

/* Modal */
.overlay {
  position: absolute;
  inset: 0 15px 0 0;
  display: flex;
  align-items: flex-start;
  justify-content: center;
  padding-top: 75px;
  background: rgba(0, 0, 0, .5);
  font-family: "Open Sans", sans-serif;
}
.modal {
  width: 455px;
  border-radius: 6px;
  background: #fff;
  box-shadow: 0 2px 8px rgba(0, 0, 0, .5);
}
.modal-head {
  display: flex;
  align-items: flex-start;
  justify-content: space-between;
  padding: 11px 10px 13px 15px;
  border: 1px solid #000;
  border-radius: 6px 6px 0 0;
  background: linear-gradient(#333, #111);
  box-shadow: inset 0 1px 0 #444;
  color: #fff;
}
.modal-head h2 { font-size: 20px; line-height: 31px; }
.modal-close { padding: 0; border: 0; background: none; }
.modal-body { padding: 15px; }
.form-grid {
  display: grid;
  grid-template-columns: 1fr 1fr;
  gap: 20px 10px;
  padding: 18px 15px 30px;
  color: #444;
}
.field { display: flex; flex-direction: column; font-size: 14px; line-height: 20px; }
.field b, .field label { font-size: 13px; font-weight: 600; line-height: 21px; }
.field select {
  height: 30px;
  padding: 0 6px;
  border: 1px solid #ccc;
  border-radius: 3px;
  background: #fff;
  color: #555;
  font: 13px "Open Sans", sans-serif;
}
.field .select-focused {
  border: 1px solid #7fb2f5;
  border-radius: 4px;
  outline: 2px solid #101010;
  outline-offset: -4px;
  box-shadow: 0 0 3px #7fb2f5;
}
.btn-submit { display: block; height: 36px; margin: 0 15px 15px; }
```
